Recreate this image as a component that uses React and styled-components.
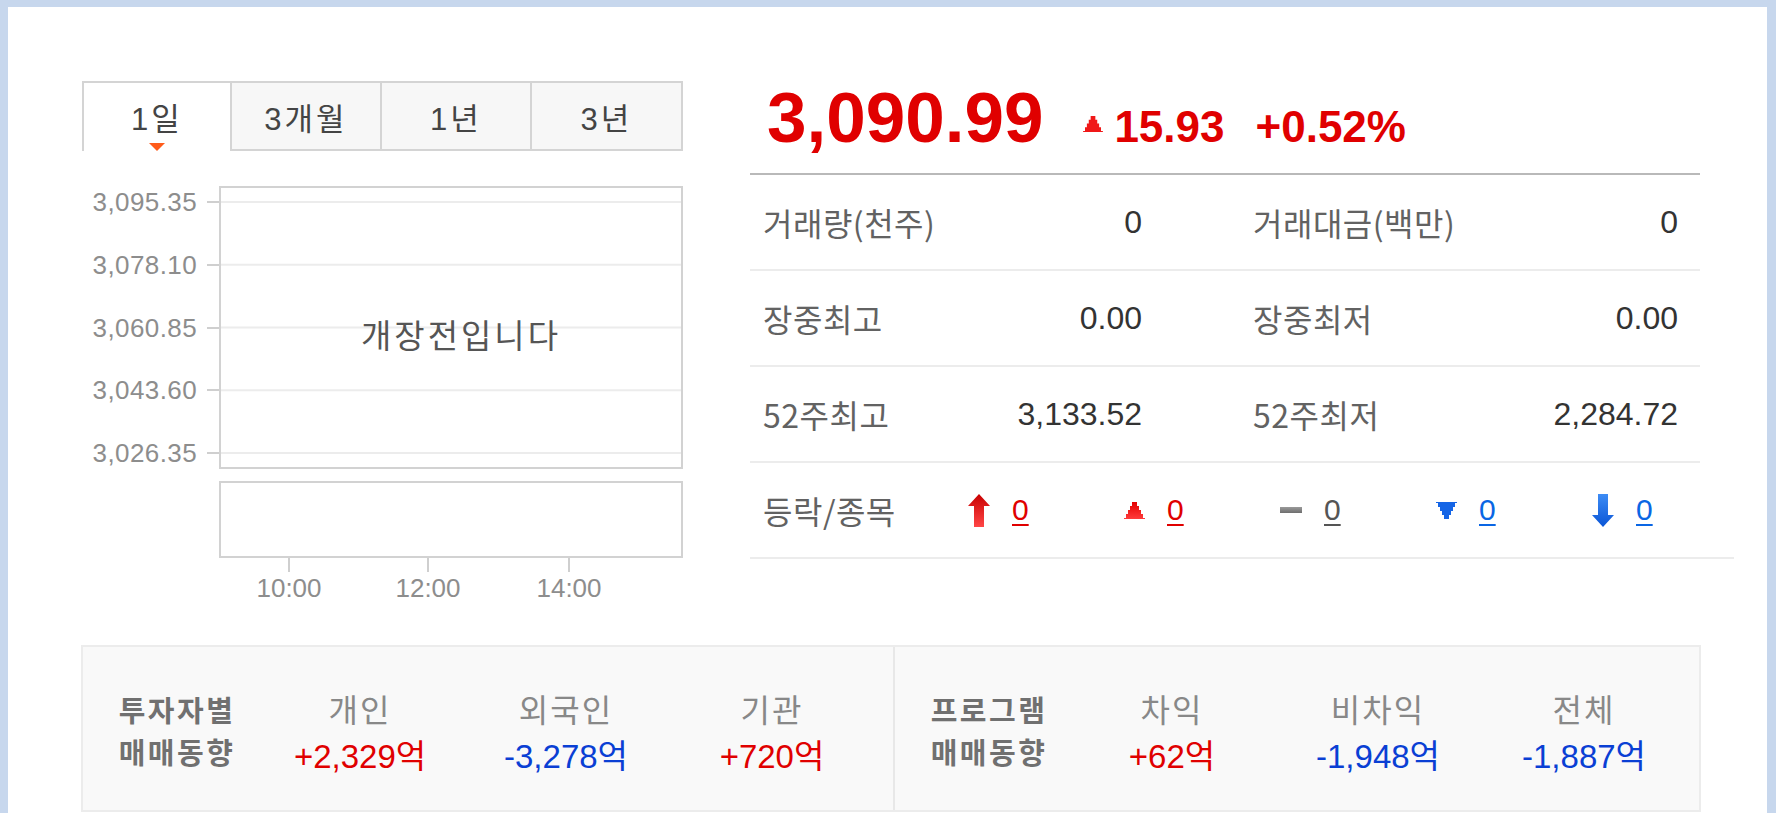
import React from "react";
import styled, { createGlobalStyle } from "styled-components";

const GlobalStyle = createGlobalStyle`
  html, body { margin: 0; padding: 0; background: #fff; }
  body { font-family: "Liberation Sans", "Noto Sans CJK KR", sans-serif; }
`;

const Frame = styled.div`
  box-sizing: border-box;
  width: 1776px;
  height: 813px;
  overflow: hidden;
  border-style: solid;
  border-color: #c7d7ed;
  border-width: 7px 9px 0 8px;
  background: #fff;
`;

const Content = styled.div`
  padding: 74px 33px 0 74px;
`;

const Top = styled.div`
  display: flex;
  gap: 67px;
`;

const LeftCol = styled.div`
  flex: none;
  width: 601px;
`;

const Tabs = styled.div`
  display: flex;
`;

const Tab = styled.div`
  position: relative;
  box-sizing: border-box;
  width: ${(p) => p.$w}px;
  height: 70px;
  padding-top: 19px;
  text-align: center;
  font-size: 31px;
  line-height: 36px;
  letter-spacing: 3px;
  color: #444;
  background: ${(p) => (p.$active ? "#fff" : "#f7f7f7")};
  border-top: 2px solid #d4d4d4;
  border-right: 2px solid #d4d4d4;
  border-left: ${(p) => (p.$first ? "2px solid #d4d4d4" : "none")};
  border-bottom: ${(p) => (p.$active ? "none" : "2px solid #d4d4d4")};
`;

const TabMarker = styled.span`
  position: absolute;
  left: 50%;
  bottom: 0;
  margin-left: -8px;
  width: 0;
  height: 0;
  border-left: 8px solid transparent;
  border-right: 8px solid transparent;
  border-top: 8px solid #ff5b1a;
`;

const ChartArea = styled.div`
  margin-top: 35px;
  display: grid;
  grid-template-columns: 137px 464px;
`;

const YAxis = styled.div`
  box-sizing: border-box;
  height: 283px;
  padding: 4px 0;
  display: flex;
  flex-direction: column;
  justify-content: space-between;
`;

const YRow = styled.div`
  display: flex;
  align-items: center;
  justify-content: flex-end;
  height: 24px;
`;

const YLabel = styled.span`
  font-size: 26px;
  line-height: 24px;
  letter-spacing: 0.4px;
  color: #8d8d8d;
`;

const YTick = styled.span`
  width: 12px;
  height: 2px;
  margin-left: 10px;
  background: #cfcfcf;
`;

const PlotBox = styled.div`
  position: relative;
  box-sizing: border-box;
  height: ${(p) => p.$h}px;
  margin-top: ${(p) => p.$mt || 0}px;
  grid-column: 2;
  border: 2px solid #d2d2d2;
  background: #fff;
  display: flex;
  align-items: center;
  justify-content: center;
  padding: 12px 0 0 20px;
`;

const GridSvg = styled.svg`
  position: absolute;
  left: 0;
  top: 0;
`;

const Closed = styled.span`
  position: relative;
  font-family: "Noto Sans CJK KR", sans-serif;
  font-size: 33px;
  letter-spacing: 3px;
  color: #555;
`;

const XAxis = styled.div`
  position: relative;
  grid-column: 2;
  height: 46px;
`;

const XTick = styled.span`
  position: absolute;
  top: 0;
  width: 2px;
  height: 14px;
  background: #cfcfcf;
`;

const XLabel = styled.span`
  position: absolute;
  top: 16px;
  transform: translateX(-50%);
  font-size: 26px;
  line-height: 28px;
  color: #8d8d8d;
`;

const RightCol = styled.div`
  flex: none;
  width: 984px;
`;

const PriceRow = styled.div`
  box-sizing: border-box;
  width: 950px;
  padding: 1px 0 19px 17px;
  border-bottom: 2px solid #b9b9b9;
  white-space: nowrap;
  font-size: 71px;
  font-weight: 700;
  line-height: 72px;
  color: #e00000;
`;

const Price = styled.span`
  font-size: 71px;
`;

const PriceTri = styled.svg`
  margin-left: 40px;
  vertical-align: 10px;
`;

const Change = styled.span`
  font-size: 44px;
  line-height: 44px;
  margin-left: ${(p) => p.$ml}px;
`;

const StatRow = styled.div`
  box-sizing: border-box;
  width: 950px;
  height: 96px;
  padding-left: 13px;
  display: grid;
  grid-template-columns: 379px 425px;
  column-gap: 111px;
  align-items: center;
  border-bottom: 2px solid #ececec;
`;

const Cell = styled.div`
  display: flex;
  align-items: center;
  justify-content: space-between;
`;

const Label = styled.span`
  font-family: "Noto Sans CJK KR", sans-serif;
  font-size: 32px;
  line-height: 40px;
  letter-spacing: 0.5px;
  color: #626262;
`;

const Value = styled.span`
  font-size: 32px;
  line-height: 40px;
  color: #333;
`;

const MoveRow = styled.div`
  box-sizing: border-box;
  width: 984px;
  height: 96px;
  padding-left: 13px;
  display: grid;
  grid-template-columns: 205px repeat(5, 156px);
  align-items: center;
  border-bottom: 2px solid #ececec;
`;

const MoveItem = styled.div`
  display: flex;
  align-items: center;
  gap: 22px;
`;

const CountLink = styled.a`
  font-size: 30px;
  line-height: 40px;
  color: ${(p) => p.$color};
  text-decoration: underline;
  text-decoration-thickness: 2px;
  text-underline-offset: 4px;
`;

const Flow = styled.div`
  box-sizing: border-box;
  margin-top: 41px;
  margin-left: -1px;
  width: 1620px;
  height: 167px;
  background: #f9f9f9;
  border: 2px solid #ececec;
  display: grid;
  grid-template-columns: 810px 1fr;
`;

const FlowGroup = styled.div`
  display: grid;
  grid-template-columns: 174px repeat(3, 206px);
  align-items: start;
  padding: 41px 0 31px;
  border-left: ${(p) => (p.$divider ? "2px solid #e8e8e8" : "none")};
`;

const FlowTitle = styled.div`
  padding-left: 14px;
  text-align: center;
  font-family: "Noto Sans CJK KR", sans-serif;
  font-size: 29px;
  font-weight: 700;
  line-height: 42px;
  letter-spacing: 2.5px;
  color: #707070;
`;

const FlowCol = styled.div`
  display: flex;
  flex-direction: column;
  align-items: center;
  gap: 9px;
`;

const FlowHead = styled.span`
  font-family: "Noto Sans CJK KR", sans-serif;
  font-size: 32px;
  line-height: 40px;
  letter-spacing: 2px;
  color: #888;
`;

const FlowValue = styled.span`
  font-size: 33px;
  line-height: 40px;
  color: ${(p) => (p.$up ? "#e00000" : "#0a3fd4")};
`;

const RED = "#e00000";
const BLUE = "#0a66e4";

const UpArrow = () => (
  <svg width="22" height="33" viewBox="0 0 22 33">
    <defs>
      <linearGradient id="ua" x1="0" y1="0" x2="0" y2="1">
        <stop offset="0" stopColor="#c80000" />
        <stop offset="1" stopColor="#ff4646" />
      </linearGradient>
    </defs>
    <path d="M11 0 L22 12 L16 12 L16 33 L6 33 L6 12 L0 12 Z" fill="url(#ua)" />
  </svg>
);

const DownArrow = () => (
  <svg width="22" height="33" viewBox="0 0 22 33">
    <defs>
      <linearGradient id="da" x1="0" y1="0" x2="0" y2="1">
        <stop offset="0" stopColor="#3d8cf5" />
        <stop offset="1" stopColor="#0a55d6" />
      </linearGradient>
    </defs>
    <path d="M11 33 L22 21 L16 21 L16 0 L6 0 L6 21 L0 21 Z" fill="url(#da)" />
  </svg>
);

const stepUp = "M8 0 H13 V4 H15 V8 H17 V12 H19 V16 H21 V17 H0 V16 H2 V12 H4 V8 H6 V4 H8 Z";
const stepDown = "M8 17 H13 V13 H15 V9 H17 V5 H19 V1 H21 V0 H0 V1 H2 V5 H4 V9 H6 V13 H8 Z";

const UpTri = () => (
  <svg width="21" height="17" viewBox="0 0 21 17">
    <defs>
      <linearGradient id="ut" x1="0" y1="0" x2="0" y2="1">
        <stop offset="0" stopColor="#e40000" />
        <stop offset="1" stopColor="#ff3c3c" />
      </linearGradient>
    </defs>
    <path d={stepUp} fill="url(#ut)" />
  </svg>
);

const DownTri = () => (
  <svg width="21" height="17" viewBox="0 0 21 17">
    <path d={stepDown} fill="#1565e6" />
  </svg>
);

const Dash = () => (
  <svg width="22" height="6" viewBox="0 0 22 6">
    <defs>
      <linearGradient id="ds" x1="0" y1="0" x2="0" y2="1">
        <stop offset="0" stopColor="#9a9a9a" />
        <stop offset="1" stopColor="#6e6e6e" />
      </linearGradient>
    </defs>
    <rect x="0" y="0" width="22" height="6" fill="url(#ds)" />
  </svg>
);

const tabs = [
  { label: "1일", w: 150, active: true },
  { label: "3개월", w: 150 },
  { label: "1년", w: 150 },
  { label: "3년", w: 151 },
];

const yLabels = ["3,095.35", "3,078.10", "3,060.85", "3,043.60", "3,026.35"];
const gridY = [14, 76.75, 139.5, 202.25, 265];
const xTicks = [
  { x: 70, t: "10:00" },
  { x: 209, t: "12:00" },
  { x: 350, t: "14:00" },
];

const stats = [
  ["거래량(천주)", "0", "거래대금(백만)", "0"],
  ["장중최고", "0.00", "장중최저", "0.00"],
  ["52주최고", "3,133.52", "52주최저", "2,284.72"],
];

const moves = [
  { icon: <UpArrow />, color: RED },
  { icon: <UpTri />, color: RED },
  { icon: <Dash />, color: "#555" },
  { icon: <DownTri />, color: BLUE },
  { icon: <DownArrow />, color: BLUE },
];

const flows = [
  {
    title: ["투자자별", "매매동향"],
    cols: [
      ["개인", "+2,329억", true],
      ["외국인", "-3,278억", false],
      ["기관", "+720억", true],
    ],
  },
  {
    title: ["프로그램", "매매동향"],
    cols: [
      ["차익", "+62억", true],
      ["비차익", "-1,948억", false],
      ["전체", "-1,887억", false],
    ],
  },
];

export default function App() {
  return (
    <>
      <GlobalStyle />
      <Frame>
        <Content>
          <Top>
            <LeftCol>
              <Tabs>
                {tabs.map((t, i) => (
                  <Tab key={t.label} $w={t.w} $active={t.active} $first={i === 0}>
                    {t.label}
                    {t.active && <TabMarker />}
                  </Tab>
                ))}
              </Tabs>
              <ChartArea>
                <YAxis>
                  {yLabels.map((l) => (
                    <YRow key={l}>
                      <YLabel>{l}</YLabel>
                      <YTick />
                    </YRow>
                  ))}
                </YAxis>
                <PlotBox $h={283}>
                  <GridSvg width="460" height="279">
                    {gridY.map((y) => (
                      <line key={y} x1="0" x2="460" y1={y} y2={y} stroke="#ececec" strokeWidth="2" />
                    ))}
                  </GridSvg>
                  <Closed>개장전입니다</Closed>
                </PlotBox>
                <PlotBox $h={77} $mt={12} />
                <XAxis>
                  {xTicks.map((x) => (
                    <React.Fragment key={x.t}>
                      <XTick style={{ left: x.x - 1 }} />
                      <XLabel style={{ left: x.x }}>{x.t}</XLabel>
                    </React.Fragment>
                  ))}
                </XAxis>
              </ChartArea>
            </LeftCol>
            <RightCol>
              <PriceRow>
                <Price>3,090.99</Price>
                <PriceTri width="20" height="16" viewBox="0 0 21 17">
                  <path d={stepUp} fill="#f01818" />
                </PriceTri>
                <Change $ml={11}>15.93</Change>
                <Change $ml={31}>+0.52%</Change>
              </PriceRow>
              {stats.map((r) => (
                <StatRow key={r[0]}>
                  <Cell>
                    <Label>{r[0]}</Label>
                    <Value>{r[1]}</Value>
                  </Cell>
                  <Cell>
                    <Label>{r[2]}</Label>
                    <Value>{r[3]}</Value>
                  </Cell>
                </StatRow>
              ))}
              <MoveRow>
                <Label>등락/종목</Label>
                {moves.map((m, i) => (
                  <MoveItem key={i}>
                    {m.icon}
                    <CountLink href="#" $color={m.color}>0</CountLink>
                  </MoveItem>
                ))}
              </MoveRow>
            </RightCol>
          </Top>
          <Flow>
            {flows.map((f, gi) => (
              <FlowGroup key={gi} $divider={gi === 1}>
                <FlowTitle>
                  {f.title[0]}
                  <br />
                  {f.title[1]}
                </FlowTitle>
                {f.cols.map((c) => (
                  <FlowCol key={c[0]}>
                    <FlowHead>{c[0]}</FlowHead>
                    <FlowValue $up={c[2]}>{c[1]}</FlowValue>
                  </FlowCol>
                ))}
              </FlowGroup>
            ))}
          </Flow>
        </Content>
      </Frame>
    </>
  );
}
